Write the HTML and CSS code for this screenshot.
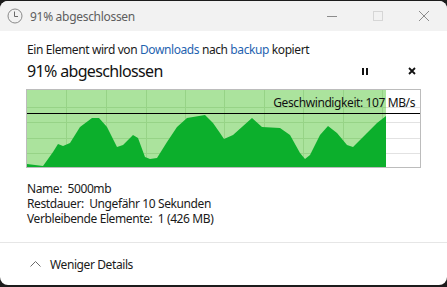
FILE: index.html
```html
<!DOCTYPE html>
<html lang="de">
<head>
  <meta charset="UTF-8">
  <meta name="viewport" content="width=device-width, initial-scale=1.0">
  <title>91% abgeschlossen</title>
  <link rel="stylesheet" href="styles.css">
</head>
<body>
  <div class="window">
    <div class="titlebar">
      <svg class="clock" width="16" height="16" viewBox="0 0 16 16">
        <circle cx="8" cy="8" r="7" fill="none" stroke="#8a8a8a" stroke-width="1"/>
        <path d="M7.5 3.5 V8.5 H11" fill="none" stroke="#6a6a6a" stroke-width="1"/>
      </svg>
      <span class="title">91% abgeschlossen</span>
      <div class="controls">
        <span class="ctl"><svg width="10" height="10" viewBox="0 0 10 10"><path d="M0 5.5 H10" stroke="#8c8c8c" stroke-width="1"/></svg></span>
        <span class="ctl"><svg width="10" height="10" viewBox="0 0 10 10"><rect x="0.5" y="0.5" width="9" height="9" fill="none" stroke="#d6d6d6" stroke-width="1"/></svg></span>
        <span class="ctl"><svg width="10" height="10" viewBox="0 0 10 10"><path d="M0 0 L10 10 M10 0 L0 10" stroke="#8c8c8c" stroke-width="1"/></svg></span>
      </div>
    </div>

    <div class="content">
      <p class="from">Ein Element wird von <a href="#">Downloads</a> nach <a href="#">backup</a> kopiert</p>
      <div class="status">
        <span class="percent">91% abgeschlossen</span>
        <div class="actions">
          <span class="act pause"><svg width="6" height="7" viewBox="0 0 6 7"><rect x="0" y="0" width="2" height="7" fill="#111"/><rect x="4" y="0" width="2" height="7" fill="#111"/></svg></span>
          <span class="act stop"><svg width="8" height="8" viewBox="0 0 8 8"><path d="M1 1 L7 7 M7 1 L1 7" stroke="#111" stroke-width="1.8"/></svg></span>
        </div>
      </div>

      <div class="graph">
        <svg width="393" height="77" viewBox="0 0 393 77">
          <rect x="0" y="0" width="359" height="77" fill="#abe39d"/>
          <g fill="#e2e2e2">
            <rect x="359" y="17" width="34" height="1"/>
            <rect x="359" y="32" width="34" height="1"/>
            <rect x="359" y="48" width="34" height="1"/>
            <rect x="359" y="63" width="34" height="1"/>
          </g>
          <g fill="#97d387">
            <rect x="0" y="17" width="359" height="1"/>
            <rect x="0" y="32" width="359" height="1"/>
            <rect x="0" y="48" width="359" height="1"/>
            <rect x="0" y="63" width="359" height="1"/>
            <rect x="39" y="0" width="1" height="77"/>
            <rect x="79" y="0" width="1" height="77"/>
            <rect x="119" y="0" width="1" height="77"/>
            <rect x="158" y="0" width="1" height="77"/>
            <rect x="197" y="0" width="1" height="77"/>
            <rect x="237" y="0" width="1" height="77"/>
            <rect x="276" y="0" width="1" height="77"/>
            <rect x="316" y="0" width="1" height="77"/>
            <rect x="355" y="0" width="1" height="77"/>
          </g>
          <path fill="#0caf2c" d="M0 74 L16 76 L26 62 L31 54 L36 56 L43 53 L53 37 L65 28 L72 28 L80 37 L90 57 L96 55 L106 45 L111 48 L118 67 L123 69 L130 68 L140 52 L150 37 L160 28 L178 25 L186 33 L193 43 L197 49 L206 45 L225 28 L235 37 L253 38 L263 45 L273 63 L278 69 L283 65 L293 45 L301 36 L310 43 L320 55 L326 57 L340 43 L350 33 L359 26 L359 77 L0 77 Z"/>
          <rect x="0" y="23" width="393" height="1" fill="#000"/>
        </svg>
        <span class="speed">Geschwindigkeit: 107 MB/s</span>
      </div>

      <div class="details">
        <p>Name:&nbsp; 5000mb</p>
        <p>Restdauer:&nbsp; Ungefähr 10 Sekunden</p>
        <p>Verbleibende Elemente:&nbsp; 1 (426 MB)</p>
      </div>
    </div>

    <div class="footer">
      <svg class="chevron" width="11" height="6" viewBox="0 0 11 6"><path d="M0.5 5.5 L5.5 0.5 L10.5 5.5" fill="none" stroke="#6a6a6a" stroke-width="1"/></svg>
      <span>Weniger Details</span>
    </div>
  </div>
</body>
</html>
```

FILE: styles.css
```css
body { margin: 0; background: #1c1c1c; font-family: "Noto Sans", sans-serif; color: #1a1a1a; letter-spacing: -0.4px; }
.window { margin-top: 1px; height: 284px; background: white; border-radius: 8px; overflow: hidden; display: flex; flex-direction: column; }
.titlebar { height: 30px; flex: none; background: #f2f2f2; display: flex; align-items: center; }
.clock { margin-left: 7px; margin-right: 7px; }
.title { font-size: 12px; color: #5e5e5e; flex: 1; letter-spacing: -0.3px; }
.controls { display: flex; height: 30px; }
.ctl { width: 46px; display: flex; align-items: center; justify-content: center; }

.content { padding: 0 27px 0 26px; flex: 1; }
.from { font-size: 12px; line-height: 16px; margin: 11px 0 0 1px; }
.from a { color: #1f63b0; text-decoration: none; }
.status { display: flex; align-items: center; margin-top: 3px; height: 20px; }
.percent { font-size: 16px; line-height: 20px; flex: 1; margin-left: 1px; color: #111; letter-spacing: -0.65px; }
.actions { display: flex; gap: 31px; }
.act { width: 16px; height: 20px; display: flex; align-items: center; justify-content: center; }

.graph { position: relative; margin-top: 8px; width: 393px; height: 77px; border: 1px solid #bcbcbc; }
.graph svg { display: block; }
.speed { position: absolute; right: 5px; top: 5px; font-size: 12px; line-height: 16px; color: #111; }

.details { margin-top: 13px; margin-left: 1px; font-size: 12px; line-height: 15px; }
.details p { margin: 0; }

.footer { height: 42px; flex: none; border-top: 1px solid #e6e6e6; display: flex; align-items: center; font-size: 12px; }
.chevron { margin-left: 30px; margin-right: 9px; }
```
